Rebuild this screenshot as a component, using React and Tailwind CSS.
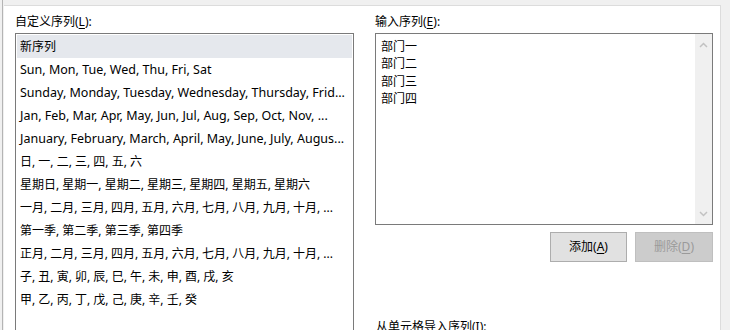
import React from "react";

const F = { fontFamily: '"Noto Sans", "Noto Sans CJK SC", sans-serif' };

const items = [
  ["新序列", false],
  ["Sun, Mon, Tue, Wed, Thu, Fri, Sat", true],
  ["Sunday, Monday, Tuesday, Wednesday, Thursday, Frid...", true],
  ["Jan, Feb, Mar, Apr, May, Jun, Jul, Aug, Sep, Oct, Nov, ...", true],
  ["January, February, March, April, May, June, July, Augus...", true],
  ["日, 一, 二, 三, 四, 五, 六", false],
  ["星期日, 星期一, 星期二, 星期三, 星期四, 星期五, 星期六", false],
  ["一月, 二月, 三月, 四月, 五月, 六月, 七月, 八月, 九月, 十月, ...", false],
  ["第一季, 第二季, 第三季, 第四季", false],
  ["正月, 二月, 三月, 四月, 五月, 六月, 七月, 八月, 九月, 十月, ...", false],
  ["子, 丑, 寅, 卯, 辰, 巳, 午, 未, 申, 酉, 戌, 亥", false],
  ["甲, 乙, 丙, 丁, 戊, 己, 庚, 辛, 壬, 癸", false],
];

function Chevron({ up }) {
  return (
    <svg width="9" height="6" viewBox="0 0 9 6" className="block">
      <path
        d={up ? "M1 5 L4.5 1.5 L8 5" : "M1 1 L4.5 4.5 L8 1"}
        fill="none"
        stroke="#c2c2c2"
        strokeWidth="1.5"
      />
    </svg>
  );
}

export default function App() {
  return (
    <div
      className="w-[730px] h-[330px] bg-[#f0f0f0] overflow-hidden flex pl-[2px] text-[12px] text-black"
      style={F}
    >
      <div className="w-px h-full bg-[#b4b4b4] shrink-0" />
      <div className="ml-px mt-[5px] w-[717px] h-[400px] shrink-0 bg-white border-t border-r border-[#dcdcdc] pt-[8px] pl-[11px] flex gap-[21px]">
        {/* left column */}
        <div className="w-[339px] shrink-0 flex flex-col">
          <div className="h-[16px] leading-[16px] mb-[3px]">
            自定义序列(<span className="underline underline-offset-2">L</span>):
          </div>
          <div className="border border-[#7a7a7a] p-px h-[340px]">
            {items.map(([t, latin], i) => (
              <div
                key={i}
                className={
                  "h-[23px] leading-[23px] pl-[3px] whitespace-nowrap overflow-hidden " +
                  (latin ? "text-[12.5px] " : "") +
                  (i === 0 ? "bg-[#e5e8ed]" : "")
                }
              >
                {t}
              </div>
            ))}
          </div>
        </div>
        {/* right column */}
        <div className="w-[338px] shrink-0 flex flex-col">
          <div className="h-[16px] leading-[16px] mb-[3px]">
            输入序列(<span className="underline underline-offset-2">E</span>):
          </div>
          <div className="border border-[#7a7a7a] h-[192px] flex">
            <div className="flex-1 pl-[5px] pt-[4px] leading-[17.3px]">
              <div>部门一</div>
              <div>部门二</div>
              <div>部门三</div>
              <div>部门四</div>
            </div>
            <div className="w-[17px] bg-[#f0f0f0] flex flex-col items-center justify-between pt-[8px] pb-[7px]">
              <Chevron up />
              <Chevron />
            </div>
          </div>
          <div className="flex justify-end gap-[8px] mt-[7px]">
            <div className="w-[77px] h-[30px] bg-[#e1e1e1] border border-[#adadad] flex items-center justify-center">
              添加(<span className="underline underline-offset-2">A</span>)
            </div>
            <div className="w-[78px] h-[30px] bg-[#cccccc] border border-[#bfbfbf] flex items-center justify-center text-[#9a9a9a]">
              删除(<span className="underline underline-offset-2">D</span>)
            </div>
          </div>
          <div className="mt-[57px] pl-px leading-[16px]">
            从单元格导入序列(<span className="underline underline-offset-2">I</span>):
          </div>
        </div>
      </div>
    </div>
  );
}
